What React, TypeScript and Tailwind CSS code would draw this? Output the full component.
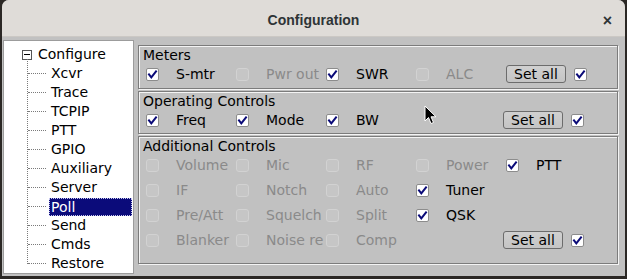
import React from "react";

type Item = { label: string; on?: boolean; disabled?: boolean };

const ui = { fontFamily: '"DejaVu Sans", "Liberation Sans", sans-serif' };

function Check({ on, disabled }: { on?: boolean; disabled?: boolean }) {
  if (disabled) {
    return <div className="w-[13px] h-[13px] shrink-0 rounded-[3px] border border-[#d2d2d2] bg-[#c6c6c6]" />;
  }
  return (
    <div className="w-[13px] h-[13px] shrink-0 rounded-[2px] border border-[#8c8c8c] bg-white flex items-center justify-center">
      {on && (
        <svg width="11" height="11" viewBox="0 0 11 11">
          <path d="M2 5.5 L4.3 8.3 L9 2.5" fill="none" stroke="#0a0a78" strokeWidth="2" strokeLinecap="square" />
        </svg>
      )}
    </div>
  );
}

function Cell({ item }: { item: Item }) {
  return (
    <div className="w-[90px] shrink-0 flex items-center">
      <Check on={item.on} disabled={item.disabled} />
      <span className={"ml-[17px] whitespace-nowrap " + (item.disabled ? "text-[#8a8a8a]" : "text-black")}>
        {item.label}
      </span>
    </div>
  );
}

function SetAll() {
  return (
    <div className="ml-auto pr-[33px] flex items-center gap-[8px]">
      <button className="w-[60px] h-[18px] rounded-[3px] border border-[#6c6c6c] bg-gradient-to-b from-[#d0d0d0] to-[#c4c4c4] text-black text-[14px] leading-none flex items-center justify-center">
        Set all
      </button>
      <Check on />
    </div>
  );
}

function Row({ items, setAll }: { items: Item[]; setAll?: boolean }) {
  return (
    <div className="h-[20px] flex items-center pl-[7px]">
      {items.map((it, i) => (
        <Cell key={i} item={it} />
      ))}
      {setAll && <SetAll />}
    </div>
  );
}

function Group({ title, className, children }: { title: string; className: string; children: React.ReactNode }) {
  return (
    <div className={"border border-[#7c7c7c] shadow-[inset_1px_1px_0_#f4f4f4,1px_1px_0_#f4f4f4] pt-[1px] " + className}>
      <div className="h-[17px] leading-[17px] pl-[4px] text-black">{title}</div>
      {children}
    </div>
  );
}

const tree = ["Xcvr", "Trace", "TCPIP", "PTT", "GPIO", "Auxiliary", "Server", "Poll", "Send", "Cmds", "Restore"];

function Tree() {
  return (
    <div className="w-[131px] h-[234px] mt-[3px] ml-[1px] bg-white border border-[#9c9c9c] pt-[4px] relative">
      <div className="absolute left-[23px] top-[18px] h-[205px] border-l border-dotted border-[#7a7a7a]" />
      <div className="h-[19px] flex items-center pl-[18px]">
        <div className="w-[10px] h-[10px] border border-[#555] bg-white flex items-center justify-center">
          <div className="w-[6px] h-[1px] bg-black" />
        </div>
        <span className="ml-[6px] text-black">Configure</span>
      </div>
      {tree.map((t) => (
        <div key={t} className="h-[19px] flex items-center pl-[24px]">
          <div className="w-[18px] border-t border-dotted border-[#7a7a7a]" />
          {t === "Poll" ? (
            <div className="ml-[3px] mr-[1px] flex-1 h-[18px] bg-[#0b0b7a] outline outline-1 outline-dotted outline-[#c8c8f0] -outline-offset-1 text-white pl-[2px] leading-[18px]">
              {t}
            </div>
          ) : (
            <span className="ml-[5px] text-black">{t}</span>
          )}
        </div>
      ))}
    </div>
  );
}

export default function App() {
  return (
    <div className="w-[627px] h-[279px] bg-[#2b2825] relative overflow-hidden text-[14px]" style={ui}>
      <div className="absolute left-[2px] top-0 w-[623px] h-[276px] rounded-t-[7px] overflow-hidden bg-[#c1c1c1] flex flex-col">
        {/* Title bar */}
        <div className="h-[37px] shrink-0 bg-[#dfdcd8] border-b border-[#cbc8c4] relative flex items-center justify-center pt-[4px]">
          <span className="text-[14px] font-bold text-[#2e3436]" style={{ fontFamily: '"Liberation Sans", sans-serif' }}>
            Configuration
          </span>
          <span className="absolute right-[13px] top-[9px] text-[16px] font-bold text-[#2e3436]" style={{ fontFamily: '"Liberation Sans", sans-serif' }}>
            ×
          </span>
        </div>

        {/* Body */}
        <div className="flex">
          <Tree />
          <div className="ml-[4px] mt-[8px] w-[480px] flex flex-col">
            <Group title="Meters" className="h-[44px]">
              <Row
                items={[
                  { label: "S-mtr", on: true },
                  { label: "Pwr out", disabled: true },
                  { label: "SWR", on: true },
                  { label: "ALC", disabled: true },
                ]}
                setAll
              />
            </Group>
            <Group title="Operating Controls" className="h-[43px] mt-[2px]">
              <Row
                items={[
                  { label: "Freq", on: true },
                  { label: "Mode", on: true },
                  { label: "BW", on: true },
                ]}
                setAll
              />
            </Group>
            <Group title="Additional Controls" className="h-[128px] mt-[2px]">
              <div className="flex flex-col gap-[5px]">
                <Row
                  items={[
                    { label: "Volume", disabled: true },
                    { label: "Mic", disabled: true },
                    { label: "RF", disabled: true },
                    { label: "Power", disabled: true },
                    { label: "PTT", on: true },
                  ]}
                />
                <Row
                  items={[
                    { label: "IF", disabled: true },
                    { label: "Notch", disabled: true },
                    { label: "Auto", disabled: true },
                    { label: "Tuner", on: true },
                  ]}
                />
                <Row
                  items={[
                    { label: "Pre/Att", disabled: true },
                    { label: "Squelch", disabled: true },
                    { label: "Split", disabled: true },
                    { label: "QSK", on: true },
                  ]}
                />
                <Row
                  items={[
                    { label: "Blanker", disabled: true },
                    { label: "Noise re", disabled: true },
                    { label: "Comp", disabled: true },
                  ]}
                  setAll
                />
              </div>
            </Group>
          </div>
        </div>
      </div>

      {/* Mouse pointer */}
      <svg className="absolute left-[424px] top-[105px]" width="14" height="21" viewBox="0 0 14 21">
        <path d="M1 1 L1 16 L4.5 12.5 L7 18.5 L9.5 17.5 L7 11.8 L12 11.8 Z" fill="#000" stroke="#fff" strokeWidth="1" strokeLinejoin="round" />
      </svg>
    </div>
  );
}
